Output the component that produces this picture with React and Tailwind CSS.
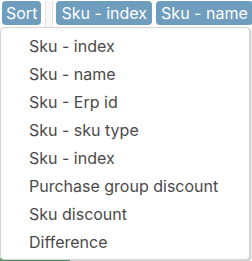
const items = [
  'Sku - index',
  'Sku - name',
  'Sku - Erp id',
  'Sku - sku type',
  'Sku - index',
  'Purchase group discount',
  'Sku discount',
  'Difference',
];

const SortMenu = () => {
  return (
    <div className="relative h-[261px] w-[252px] overflow-hidden bg-white font-['Inter',sans-serif]">
      <div className="flex items-start whitespace-nowrap pt-[1px]">
        <button className="ml-[2px] h-[24px] shrink-0 rounded-[4px] bg-[#6f9dbd] px-[4px] text-[16px] leading-[24px] text-white">
          Sort
        </button>
        <div className="ml-[4px] h-[26px] w-[8px] shrink-0 border-x border-[#e3e3e3] bg-[#f7f7f7]" />
        <button className="ml-[3px] h-[24px] shrink-0 rounded-[4px] bg-[#6f9dbd] px-[5px] text-[16px] leading-[24px] text-white">
          Sku - index
        </button>
        <button className="ml-[4px] h-[24px] shrink-0 rounded-[4px] bg-[#6f9dbd] px-[5px] text-[16px] leading-[24px] text-white">
          Sku - name
        </button>
      </div>
      <div className="absolute bottom-0 left-0 h-[3px] w-[70px] bg-[#5aa870]" />
      <div className="absolute left-0 top-[27px] w-[250px] rounded-[4px] border border-[#d4d4d4] bg-white pb-[3px] pt-[4px] shadow-[1px_1px_2px_rgba(0,0,0,0.25)]">
        {items.map((item, i) => (
          <div key={i} className="h-[28px] pl-[28px] text-[16px] leading-[28px] text-[#4a4a4a]">
            {item}
          </div>
        ))}
      </div>
    </div>
  );
};

export default function App() {
  return <SortMenu />;
}
